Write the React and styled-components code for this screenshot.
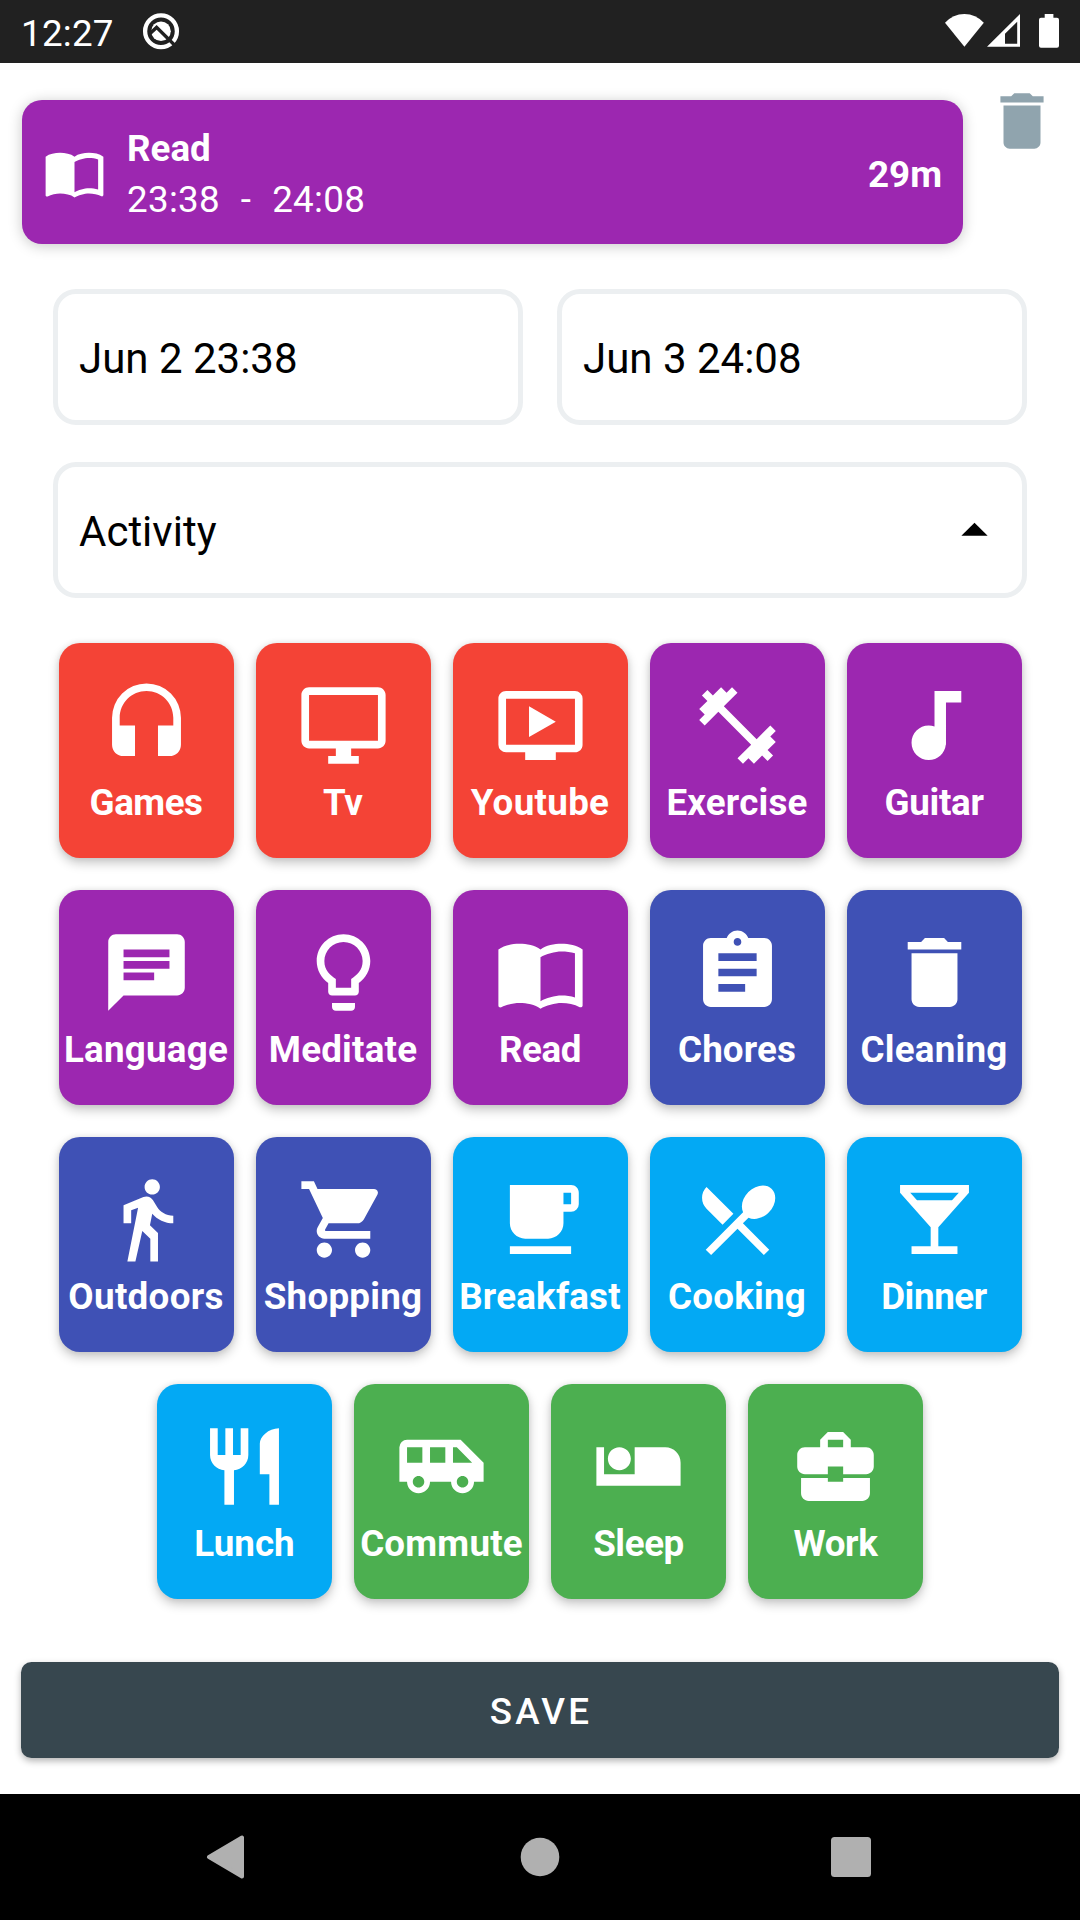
import React from "react";
import styled, { createGlobalStyle } from "styled-components";
import {
  MdImportContacts,
  MdDelete,
  MdArrowDropUp,
  MdHeadset,
  MdOndemandVideo,
  MdFitnessCenter,
  MdAudiotrack,
  MdChat,
  MdLightbulbOutline,
  MdAssignment,
  MdDirectionsWalk,
  MdShoppingCart,
  MdLocalCafe,
  MdRestaurantMenu,
  MdLocalBar,
  MdRestaurant,
  MdAirportShuttle,
  MdAirlineSeatIndividualSuite,
  MdBusinessCenter,
} from "react-icons/md";

const colors = {
  red: "#f44336",
  purple: "#9c27b0",
  indigo: "#3f51b5",
  blue: "#03a9f4",
  green: "#4caf50",
  slate: "#37474f",
  slateLight: "#90a4ae",
  outline: "#eceff1",
};

const GlobalStyle = createGlobalStyle`
  *, *::before, *::after { box-sizing: border-box; }
  body {
    margin: 0;
    background: #ffffff;
    font-family: Roboto, "Noto Sans", sans-serif;
  }
  svg { display: block; flex: none; }
`;

const Screen = styled.div`
  display: flex;
  flex-direction: column;
  width: 1080px;
  height: 1920px;
  overflow: hidden;
  background: #ffffff;
`;

const StatusBar = styled.header`
  display: flex;
  align-items: flex-start;
  height: 63px;
  flex: none;
  padding: 0 21px;
  background: #212121;
  color: #ffffff;
`;

const Clock = styled.span`
  width: 121px;
  padding-top: 12px;
  font-size: 36.75px;
  letter-spacing: 0.25px;
  line-height: 43px;
`;

const StatusIcons = styled.div`
  display: flex;
  margin-left: auto;
`;

const Content = styled.main`
  display: flex;
  flex-direction: column;
  flex: 1;
`;

const EntryRow = styled.section`
  display: flex;
  align-items: flex-start;
  padding: 21px 21px 0 22px;
`;

const EntryCard = styled.div`
  display: flex;
  align-items: center;
  width: 941px;
  height: 144px;
  margin-top: 16px;
  padding: 0 21px;
  border-radius: 20px;
  background: ${colors.purple};
  color: #ffffff;
  font-size: 36.75px;
  box-shadow: 0 2px 14px rgba(0, 0, 0, 0.22);
`;

const EntryText = styled.div`
  display: flex;
  flex-direction: column;
  margin: 4px 0 0 21px;
  gap: 2px;
`;

const EntryName = styled.span`
  font-weight: 700;
  line-height: 49px;
`;

const EntryTimes = styled.span`
  letter-spacing: 0.3px;
  word-spacing: 1px;
  line-height: 49px;
  white-space: pre;
`;

const Duration = styled.span`
  margin: 4px 0 0 auto;
  font-weight: 700;
  line-height: 49px;
`;

const DeleteButton = styled.button`
  margin-left: 22px;
  padding: 0;
  border: 0;
  background: none;
  color: ${colors.slateLight};
`;

const Form = styled.section`
  display: flex;
  flex-direction: column;
  gap: 37px;
  padding: 45px 53px 0;
`;

const DateRow = styled.div`
  display: flex;
  gap: 34px;
`;

const Field = styled.div`
  display: flex;
  align-items: center;
  justify-content: space-between;
  flex: 1;
  min-height: 136px;
  padding: 2px 16px 0 21px;
  border: 5px solid ${colors.outline};
  border-radius: 23px;
  color: #000000;
  font-size: 42px;
  line-height: 49px;
`;

const ExpandArrow = styled(MdArrowDropUp)`
  margin-bottom: 2px;
`;

const ActivityGrid = styled.section`
  display: flex;
  flex-wrap: wrap;
  justify-content: center;
  gap: 32px 22px;
  margin-top: 45px;
  padding: 0 58px;
`;

const ActivityTile = styled.button`
  display: flex;
  flex-direction: column;
  align-items: center;
  width: 175px;
  height: 215px;
  padding: 36px 0 0;
  border: 0;
  border-radius: 21px;
  background: ${(p) => p.$color};
  color: #ffffff;
  box-shadow: 0 5px 11px rgba(0, 0, 0, 0.22), 0 0 6px rgba(0, 0, 0, 0.08);
`;

const ActivityLabel = styled.span`
  margin-top: 6px;
  font-family: Roboto, "Noto Sans", sans-serif;
  font-size: 36.75px;
  font-weight: 700;
  letter-spacing: ${(p) => p.$tracking}px;
  line-height: 49px;
  white-space: nowrap;
`;

const SaveButton = styled.button`
  height: 96px;
  margin: 63px 21px 0;
  padding: 2px 0 0 2px;
  border: 0;
  border-radius: 10.5px;
  background: ${colors.slate};
  color: #ffffff;
  font-family: Roboto, "Noto Sans", sans-serif;
  font-size: 36.75px;
  font-weight: 500;
  letter-spacing: 3.28px;
  line-height: 49px;
  box-shadow: 0 3px 7px rgba(0, 0, 0, 0.3);
`;

const NavBar = styled.nav`
  display: flex;
  align-items: center;
  justify-content: space-between;
  height: 126px;
  flex: none;
  padding: 0 205px;
  background: #000000;
`;

function DesktopIcon({ size, viewBox }) {
  return (
    <svg width={size} height={size} viewBox={viewBox} fill="currentColor">
      <path d="M21 2H3c-1.1 0-2 .9-2 2v12c0 1.1.9 2 2 2h7v2H8v2h8v-2h-2v-2h7c1.1 0 2-.9 2-2V4c0-1.1-.9-2-2-2zm0 14H3V4h18v12z" />
    </svg>
  );
}

const activities = [
  { name: "Games", color: colors.red, Icon: MdHeadset, tracking: -0.5 },
  { name: "Tv", color: colors.red, Icon: DesktopIcon },
  { name: "Youtube", color: colors.red, Icon: MdOndemandVideo, tracking: 0.3 },
  { name: "Exercise", color: colors.purple, Icon: MdFitnessCenter, tracking: 0.2 },
  { name: "Guitar", color: colors.purple, Icon: MdAudiotrack, tracking: -0.3 },
  { name: "Language", color: colors.purple, Icon: MdChat, tracking: 0.25 },
  { name: "Meditate", color: colors.purple, Icon: MdLightbulbOutline, tracking: 0.2 },
  { name: "Read", color: colors.purple, Icon: MdImportContacts, tracking: -0.4 },
  { name: "Chores", color: colors.indigo, Icon: MdAssignment, tracking: 0.15 },
  { name: "Cleaning", color: colors.indigo, Icon: MdDelete, tracking: 0.2 },
  { name: "Outdoors", color: colors.indigo, Icon: MdDirectionsWalk, tracking: 0.3 },
  { name: "Shopping", color: colors.indigo, Icon: MdShoppingCart, tracking: 0.25 },
  { name: "Breakfast", color: colors.blue, Icon: MdLocalCafe, tracking: 0.2 },
  { name: "Cooking", color: colors.blue, Icon: MdRestaurantMenu, tracking: 0.2 },
  { name: "Dinner", color: colors.blue, Icon: MdLocalBar, tracking: -0.4 },
  { name: "Lunch", color: colors.blue, Icon: MdRestaurant },
  { name: "Commute", color: colors.green, Icon: MdAirportShuttle, tracking: 0.2 },
  { name: "Sleep", color: colors.green, Icon: MdAirlineSeatIndividualSuite, tracking: -0.4 },
  { name: "Work", color: colors.green, Icon: MdBusinessCenter, tracking: -0.4 },
];

function SystemBadge() {
  return (
    <svg width="38" height="63" viewBox="0 0 38 63">
      <circle cx="19" cy="31.3" r="15.9" fill="none" stroke="#fff" strokeWidth="4.3" />
      <circle cx="19" cy="31.3" r="9.8" fill="#fff" />
      <path d="M7.5 34L14.6 27.4L33.5 46" fill="none" stroke="#212121" strokeWidth="3.4" />
    </svg>
  );
}

function SignalIcons() {
  return (
    <svg width="114" height="63" viewBox="945 0 114 63" fill="#fff">
      <path d="M964.4 46.8L945 22.8Q953 14 964.4 14T983.8 22.8Z" />
      <path
        fillRule="evenodd"
        d="M987 46.8L1020 14V46.8ZM1005 33.8V43.8H1017.2V21.7Z"
      />
      <path d="M1044.7 14h8.7v3.7h3.6q2 0 2 2V45.7q0 2-2 2h-16q-2 0-2-2V19.7q0-2 2-2h3.7z" />
    </svg>
  );
}

export default function App() {
  return (
    <Screen>
      <GlobalStyle />
      <StatusBar>
        <Clock>12:27</Clock>
        <SystemBadge />
        <StatusIcons>
          <SignalIcons />
        </StatusIcons>
      </StatusBar>

      <Content>
        <EntryRow>
          <EntryCard>
            <MdImportContacts size={63} />
            <EntryText>
              <EntryName>Read</EntryName>
              <EntryTimes>{"23:38  -  24:08"}</EntryTimes>
            </EntryText>
            <Duration>29m</Duration>
          </EntryCard>
          <DeleteButton aria-label="Delete">
            <MdDelete size={74} />
          </DeleteButton>
        </EntryRow>

        <Form>
          <DateRow>
            <Field>Jun 2 23:38</Field>
            <Field>Jun 3 24:08</Field>
          </DateRow>
          <Field>
            Activity
            <ExpandArrow size={63} />
          </Field>
        </Form>

        <ActivityGrid>
          {activities.map(({ name, color, Icon, tracking = 0 }) => (
            <ActivityTile key={name} $color={color}>
              <Icon size={93} viewBox="-0.147 -0.147 24.294 24.294" />
              <ActivityLabel $tracking={tracking}>{name}</ActivityLabel>
            </ActivityTile>
          ))}
        </ActivityGrid>

        <SaveButton>SAVE</SaveButton>
      </Content>

      <NavBar>
        <svg width="48" height="44" viewBox="0 0 48 44">
          <path
            d="M4 22L37 2.5V41.5Z"
            fill="#b0b0b0"
            stroke="#b0b0b0"
            strokeWidth="4"
            strokeLinejoin="round"
          />
        </svg>
        <svg width="48" height="48" viewBox="0 0 48 48">
          <circle cx="24" cy="24" r="19.3" fill="#b0b0b0" />
        </svg>
        <svg width="48" height="48" viewBox="0 0 48 48">
          <rect x="4" y="4" width="40" height="40" rx="3.5" fill="#b0b0b0" />
        </svg>
      </NavBar>
    </Screen>
  );
}
